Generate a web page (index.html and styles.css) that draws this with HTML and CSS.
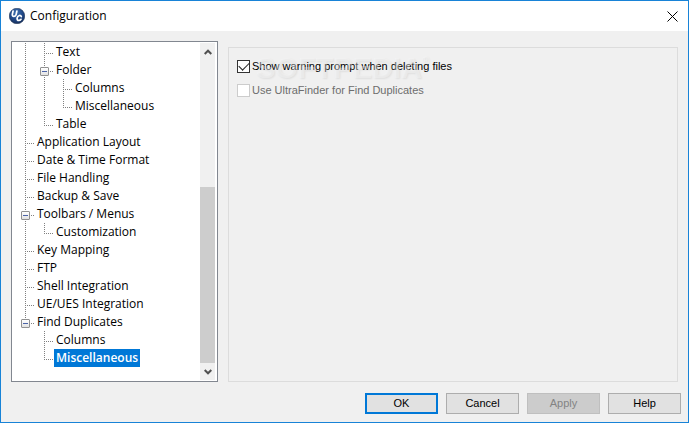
FILE: index.html
```html
<!DOCTYPE html>
<html lang="en">
<head>
<meta charset="utf-8">
<title>Configuration</title>
<link rel="stylesheet" href="styles.css">
</head>
<body>
<div class="window">
  <header class="titlebar">
    <svg class="logo" viewBox="0 0 16 16" aria-hidden="true">
      <defs>
        <radialGradient id="ball" cx="45%" cy="30%" r="75%">
          <stop offset="0" stop-color="#3f72b4"/>
          <stop offset="0.6" stop-color="#1f4583"/>
          <stop offset="1" stop-color="#152c55"/>
        </radialGradient>
      </defs>
      <circle cx="8" cy="8" r="7.8" fill="url(#ball)" stroke="#1c2f4c" stroke-width="0.5"/>
      <g fill="none" stroke="#fff" stroke-width="1.7" stroke-linecap="round">
        <path d="M4.1 3 L3.3 6.4 Q3.2 8.5 5 8.4 Q6.7 8.3 7.1 6.6 L7.9 3"/>
        <path d="M12.3 8.6 Q11.9 7.3 10.4 7.5 Q8.4 8 8.1 10.2 Q8 12.4 9.8 12.5 Q11.2 12.5 12 11.3"/>
      </g>
    </svg>
    <h1 class="title">Configuration</h1>
    <button class="close" type="button" aria-label="Close">
      <svg viewBox="0 0 11 11" aria-hidden="true"><path d="M0.5 0.5 L10.5 10.5 M10.5 0.5 L0.5 10.5"/></svg>
    </button>
  </header>

  <main class="content">
    <nav class="tree-box" aria-label="Settings">
      <ul class="tree">
        <li>
          <ul>
            <li><div class="row leaf"><a href="#text">Text</a></div></li>
            <li>
              <div class="row"><button class="toggle" type="button" aria-label="Collapse Folder"></button><a href="#folder">Folder</a></div>
              <ul>
                <li><div class="row leaf"><a href="#folder-columns">Columns</a></div></li>
                <li><div class="row leaf"><a href="#folder-misc">Miscellaneous</a></div></li>
              </ul>
            </li>
            <li><div class="row leaf"><a href="#table">Table</a></div></li>
          </ul>
        </li>
        <li><div class="row leaf"><a href="#layout">Application Layout</a></div></li>
        <li><div class="row leaf"><a href="#date">Date &amp; Time Format</a></div></li>
        <li><div class="row leaf"><a href="#file">File Handling</a></div></li>
        <li><div class="row leaf"><a href="#backup">Backup &amp; Save</a></div></li>
        <li>
          <div class="row"><button class="toggle" type="button" aria-label="Collapse Toolbars / Menus"></button><a href="#toolbars">Toolbars / Menus</a></div>
          <ul>
            <li><div class="row leaf"><a href="#customization">Customization</a></div></li>
          </ul>
        </li>
        <li><div class="row leaf"><a href="#keys">Key Mapping</a></div></li>
        <li><div class="row leaf"><a href="#ftp">FTP</a></div></li>
        <li><div class="row leaf"><a href="#shell">Shell Integration</a></div></li>
        <li><div class="row leaf"><a href="#ue">UE/UES Integration</a></div></li>
        <li>
          <div class="row"><button class="toggle" type="button" aria-label="Collapse Find Duplicates"></button><a href="#duplicates">Find Duplicates</a></div>
          <ul>
            <li><div class="row leaf"><a href="#dup-columns">Columns</a></div></li>
            <li><div class="row leaf"><a class="selected" href="#dup-misc" aria-current="page">Miscellaneous</a></div></li>
          </ul>
        </li>
      </ul>
      <div class="scrollbar">
        <button class="arrow" type="button" aria-label="Scroll up"><svg viewBox="0 0 8 6" aria-hidden="true"><path d="M0.7 5 L4 1.7 L7.3 5"/></svg></button>
        <div class="track"><div class="thumb"></div></div>
        <button class="arrow" type="button" aria-label="Scroll down"><svg viewBox="0 0 8 6" aria-hidden="true"><path d="M0.7 1 L4 4.3 L7.3 1"/></svg></button>
      </div>
    </nav>

    <section class="panel">
      <label class="option"><input type="checkbox" checked><span>Show warning prompt when deleting files</span></label>
      <label class="option"><input type="checkbox" disabled><span>Use UltraFinder for Find Duplicates</span></label>
      <div class="watermark">SOFTPEDIA<sup>®</sup></div>
    </section>
  </main>

  <footer class="actions">
    <button class="btn primary" type="button">OK</button>
    <button class="btn" type="button">Cancel</button>
    <button class="btn" type="button" disabled>Apply</button>
    <button class="btn" type="button">Help</button>
  </footer>
</div>
</body>
</html>
```
FILE: styles.css
```css
* {
  box-sizing: border-box;
}

body {
  margin: 0;
  color: #000;
  font: 12px/18px "Open Sans", sans-serif;
}

button {
  margin: 0;
  padding: 0;
  border: 0;
  background: none;
  font: inherit;
  color: inherit;
}

.window {
  display: flex;
  flex-direction: column;
  min-height: 100vh;
  border: 1px solid #1883d7;
  background: #f0f0f0;
}

.titlebar {
  display: flex;
  align-items: center;
  height: 30px;
  padding: 0 10px 0 8px;
  background: #fff;
}

.logo {
  width: 16px;
  height: 16px;
}

.title {
  flex: 1;
  margin: 0 0 0 5px;
  font-size: 12px;
  font-weight: 400;
}

.close {
  display: flex;
}

.close svg {
  width: 11px;
  height: 11px;
  fill: none;
  stroke: #000;
}

.content {
  display: flex;
  flex: 1;
  gap: 10px;
  padding: 10px 10px 0;
}

/* Tree */

.tree-box {
  display: flex;
  width: 207px;
  padding: 1px 2px 1px 0;
  border: 1px solid #828790;
  background: #fff;
}

.tree,
.tree ul {
  margin: 0;
  padding: 0;
  list-style: none;
}

.tree {
  flex: 1;
  padding-left: 9px;
}

.tree ul {
  padding-left: 19px;
}

.tree li {
  background: repeating-linear-gradient(#808080 0 1px, transparent 1px 2px) 4px 0 / 1px 100% no-repeat;
}

.tree li:last-child {
  background-size: 1px 11px;
}

.row {
  display: flex;
  align-items: center;
  height: 18px;
  background: repeating-linear-gradient(90deg, #808080 0 1px, transparent 1px 2px) 4px 10px / 9px 1px no-repeat;
}

.row a {
  padding: 0 2px;
  margin-left: 5px;
  color: inherit;
  text-decoration: none;
  white-space: nowrap;
}

.leaf a {
  margin-left: 14px;
}

.row .selected {
  background: #0078d7;
  color: #fff;
  font-weight: 600;
}

.toggle {
  width: 9px;
  height: 9px;
  margin-top: 3px;
  border: 1px solid #919191;
  border-radius: 1px;
  background:
    linear-gradient(#4b63a7, #4b63a7) center / 5px 1px no-repeat,
    linear-gradient(#fff, #e2e2e2);
}

.scrollbar {
  display: flex;
  flex-direction: column;
  width: 15px;
  background: #f0f0f0;
}

.arrow {
  display: flex;
  align-items: center;
  justify-content: center;
  height: 17px;
}

.arrow svg {
  width: 8px;
  height: 6px;
  fill: none;
  stroke: #505050;
  stroke-width: 2;
}

.track {
  display: flex;
  flex: 1;
  flex-direction: column;
  justify-content: flex-end;
}

.thumb {
  height: 58%;
  background: #cdcdcd;
}

/* Options */

.panel {
  position: relative;
  flex: 1;
  margin-top: 6px;
  padding: 6px 8px;
  border: 1px solid #dcdcdc;
}

.option {
  display: flex;
  align-items: center;
  gap: 2px;
  height: 24px;
  font: 11px/13px "Liberation Sans", sans-serif;
}

.option input {
  appearance: none;
  display: grid;
  place-items: center;
  width: 13px;
  height: 13px;
  margin: 0;
  border: 1px solid #333;
  background: #fff;
}

.option input:checked::before {
  content: "";
  width: 9px;
  height: 5px;
  margin-top: -2px;
  border: solid #222;
  border-width: 0 0 1px 1px;
  transform: rotate(-45deg);
}

.option input:disabled {
  border-color: #ccc;
}

.option input:disabled + span {
  color: #6d6d6d;
}

.watermark {
  position: absolute;
  top: 2px;
  left: 27px;
  color: rgba(250, 250, 250, 0.4);
  font: bold 29px/36px "Liberation Sans", sans-serif;
  text-shadow: 1px 1px 2px rgba(0, 0, 0, 0.07);
  pointer-events: none;
}

.watermark sup {
  font-size: 10px;
  line-height: 0;
  vertical-align: 14px;
}

/* Buttons */

.actions {
  display: flex;
  justify-content: flex-end;
  gap: 8px;
  padding: 11px 7px 8px;
}

.btn {
  width: 73px;
  height: 21px;
  border: 1px solid #adadad;
  background: #e1e1e1;
  font: 11px/13px "Liberation Sans", sans-serif;
}

.btn.primary {
  border: 2px solid #0078d7;
}

.btn:disabled {
  border-color: #bfbfbf;
  background: #ccc;
  color: #838383;
}
```
